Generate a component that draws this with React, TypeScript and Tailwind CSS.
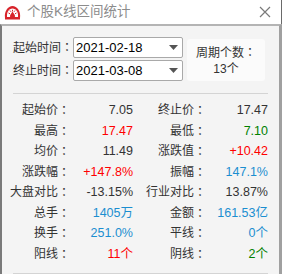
type Cell = { label: string; value: string; color: string };

const rows: [Cell, Cell][] = [
  [
    { label: "起始价", value: "7.05", color: "text-[#333333]" },
    { label: "终止价", value: "17.47", color: "text-[#333333]" },
  ],
  [
    { label: "最高", value: "17.47", color: "text-[#ff0000]" },
    { label: "最低", value: "7.10", color: "text-[#008000]" },
  ],
  [
    { label: "均价", value: "11.49", color: "text-[#333333]" },
    { label: "涨跌值", value: "+10.42", color: "text-[#ff0000]" },
  ],
  [
    { label: "涨跌幅", value: "+147.8%", color: "text-[#ff0000]" },
    { label: "振幅", value: "147.1%", color: "text-[#1b8ed0]" },
  ],
  [
    { label: "大盘对比", value: "-13.15%", color: "text-[#333333]" },
    { label: "行业对比", value: "13.87%", color: "text-[#333333]" },
  ],
  [
    { label: "总手", value: "1405万", color: "text-[#1b8ed0]" },
    { label: "金额", value: "161.53亿", color: "text-[#1b8ed0]" },
  ],
  [
    { label: "换手", value: "251.0%", color: "text-[#1b8ed0]" },
    { label: "平线", value: "0个", color: "text-[#1b8ed0]" },
  ],
  [
    { label: "阳线", value: "11个", color: "text-[#ff0000]" },
    { label: "阴线", value: "2个", color: "text-[#008000]" },
  ],
];

// full-width colon drawn centred in its cell, as in the reference
function Colon() {
  return <span style={{ fontFamily: '"Noto Sans CJK TC", sans-serif' }}>：</span>;
}

function GaugeIcon() {
  return (
    <svg width="17" height="15" viewBox="0 0 17 15">
      <path d="M1 13 C0 6 4 1 8.5 1 C13 1 17 6 16 13 Z" fill="#d8232a" />
      <path d="M3 12 C2.5 7 5 3.5 8.5 3.5 C12 3.5 14.5 7 14 12 Z" fill="#ffffff" />
      <path d="M4.5 8 L6 8.8 M6 5.5 L7 6.8 M8.5 4.8 L8.5 6.4 M11 5.5 L10 6.8 M12.5 8 L11 8.8" stroke="#d8232a" strokeWidth="1" />
      <path d="M8.5 6.5 C9.5 8.5 11 9.5 11 11 C11 12.4 10 13.2 8.5 13.2 C7 13.2 6 12.4 6 11 C6 9.5 7.5 8.5 8.5 6.5 Z" fill="#d8232a" />
      <rect x="1" y="13" width="15" height="1.5" fill="#d8232a" />
    </svg>
  );
}

function DateBox({ value }: { value: string }) {
  return (
    <div className="w-[110px] h-[21px] bg-white border border-[#a9a9a9] rounded-[2px] flex items-center pl-[2px] pr-[4px]">
      <span className="flex-1 text-[13px] leading-[19px] text-black whitespace-nowrap">{value}</span>
      <svg width="9" height="5" viewBox="0 0 9 5">
        <path d="M0 0 L9 0 L4.5 5 Z" fill="#555555" />
      </svg>
    </div>
  );
}

export default function App() {
  return (
    <div
      className="w-[282px] h-[274px] bg-white flex flex-col overflow-hidden"
      style={{ fontFamily: '"Liberation Sans", "Noto Sans CJK SC", sans-serif' }}
    >
      <div className="h-[24px] shrink-0 flex items-center pl-[4px] pr-[10px] border-r border-[#6a6a6a]">
        <GaugeIcon />
        <span className="ml-[6px] text-[13.5px] leading-[16px] text-[#8c8c8c] flex-1 whitespace-nowrap">个股K线区间统计</span>
        <svg width="12" height="12" viewBox="0 0 12 12">
          <path d="M1 1 L11 11 M11 1 L1 11" stroke="#7a7a7a" strokeWidth="1.2" />
        </svg>
      </div>
      <div className="flex-1 bg-[#f4f4f4] border-t-2 border-t-[#b4b4b4] border-l-2 border-l-[#7a7a7a] border-r-[3px] border-r-[#a0a0a0] pl-[11px] pr-[9px]">
        <div className="flex items-start pt-[11px]">
          <div className="flex flex-col gap-[2px]">
            <div className="flex items-center">
              <span className="w-[60px] text-[12px] leading-[16px] text-[#333333] whitespace-nowrap">
                起始时间<Colon />
              </span>
              <DateBox value="2021-02-18" />
            </div>
            <div className="flex items-center">
              <span className="w-[60px] text-[12px] leading-[16px] text-[#333333] whitespace-nowrap">
                终止时间<Colon />
              </span>
              <DateBox value="2021-03-08" />
            </div>
          </div>
          <div className="ml-[4px] mt-[2px] w-[78px] h-[42px] bg-[#fbfbfb] rounded-[3px] flex flex-col items-center justify-center text-[12px] text-[#333333]">
            <span className="leading-[16px] whitespace-nowrap">
              周期个数<Colon />
            </span>
            <span className="leading-[16px] whitespace-nowrap">13个</span>
          </div>
        </div>
        <div className="mt-[12px] h-px bg-[#d4d4d4] w-[255px]" />
        <div className="pt-[6px] grid grid-cols-[57px_63px_73px_62px] text-[12.5px] leading-[16px]">
          {rows.map((row, i) =>
            row.map((c, j) => (
              <div key={`${i}-${j}`} className="contents">
                <div className="h-[20.5px] flex items-center justify-end text-[#333333] text-[12px] whitespace-nowrap">
                  {c.label}
                  <Colon />
                </div>
                <div className={`h-[20.5px] flex items-center justify-end whitespace-nowrap ${c.color}`}>{c.value}</div>
              </div>
            ))
          )}
        </div>
        <div className="mt-[9px] h-px bg-[#d4d4d4] w-[255px]" />
      </div>
    </div>
  );
}
